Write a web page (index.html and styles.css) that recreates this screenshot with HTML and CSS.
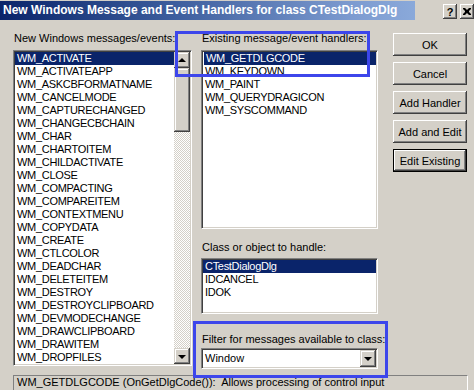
FILE: index.html
```html
<!DOCTYPE html>
<html>
<head>
<meta charset="utf-8">
<link rel="stylesheet" href="styles.css">
</head>
<body>
<div class="window">
  <div class="titlebar">
    <div class="caption">New Windows Message and Event Handlers for class CTestDialogDlg</div>
    <div class="tbtns">
      <span class="tbtn help">?</span>
      <span class="tbtn close"><svg width="8" height="7" viewBox="0 0 8 7"><path d="M0 0h2l2 2 2-2h2v1l-2 2v1l2 2v1h-2l-2-2-2 2h-2v-1l2-2v-1l-2-2z" fill="#000"/></svg></span>
    </div>
  </div>

  <div class="main">
    <div class="col col-left">
      <div class="label">New Windows messages/events:</div>
      <div class="listbox lb-messages">
        <div class="items">
          <div class="item sel">WM_ACTIVATE</div>
          <div class="item">WM_ACTIVATEAPP</div>
          <div class="item">WM_ASKCBFORMATNAME</div>
          <div class="item">WM_CANCELMODE</div>
          <div class="item">WM_CAPTURECHANGED</div>
          <div class="item">WM_CHANGECBCHAIN</div>
          <div class="item">WM_CHAR</div>
          <div class="item">WM_CHARTOITEM</div>
          <div class="item">WM_CHILDACTIVATE</div>
          <div class="item">WM_CLOSE</div>
          <div class="item">WM_COMPACTING</div>
          <div class="item">WM_COMPAREITEM</div>
          <div class="item">WM_CONTEXTMENU</div>
          <div class="item">WM_COPYDATA</div>
          <div class="item">WM_CREATE</div>
          <div class="item">WM_CTLCOLOR</div>
          <div class="item">WM_DEADCHAR</div>
          <div class="item">WM_DELETEITEM</div>
          <div class="item">WM_DESTROY</div>
          <div class="item">WM_DESTROYCLIPBOARD</div>
          <div class="item">WM_DEVMODECHANGE</div>
          <div class="item">WM_DRAWCLIPBOARD</div>
          <div class="item">WM_DRAWITEM</div>
          <div class="item">WM_DROPFILES</div>
        </div>
        <div class="vscroll">
          <div class="sbtn"><i class="arr-up"></i></div>
          <div class="thumb"></div>
          <div class="track"></div>
          <div class="sbtn"><i class="arr-down"></i></div>
        </div>
      </div>
    </div>

    <div class="col col-mid">
      <div class="label">Existing message/event handlers:</div>
      <div class="listbox lb-existing">
        <div class="items">
          <div class="item sel">WM_GETDLGCODE</div>
          <div class="item">WM_KEYDOWN</div>
          <div class="item">WM_PAINT</div>
          <div class="item">WM_QUERYDRAGICON</div>
          <div class="item">WM_SYSCOMMAND</div>
        </div>
      </div>
      <div class="label label-class">Class or object to handle:</div>
      <div class="listbox lb-class">
        <div class="items">
          <div class="item sel">CTestDialogDlg</div>
          <div class="item">IDCANCEL</div>
          <div class="item">IDOK</div>
        </div>
      </div>
      <div class="label label-filter">Filter for messages available to class:</div>
      <div class="combo">
        <div class="combo-text">Window</div>
        <div class="sbtn combo-btn"><i class="arr-down"></i></div>
      </div>
    </div>

    <div class="col col-right">
      <div class="btn">OK</div>
      <div class="btn">Cancel</div>
      <div class="btn">Add Handler</div>
      <div class="btn">Add and Edit</div>
      <div class="btn default"><span>Edit Existing</span></div>
    </div>
  </div>

  <div class="status">WM_GETDLGCODE (OnGetDlgCode()):&nbsp; Allows processing of control input</div>

  <div class="mark mark1"></div>
  <div class="mark mark2"></div>
</div>
</body>
</html>
```

FILE: styles.css
```css
* { box-sizing: border-box; }
html, body {
  margin: 0;
  padding: 0;
  background: #d4d0c8;
}
body {
  width: 474px;
  height: 390px;
  overflow: hidden;
  font-family: "Liberation Sans", Arial, sans-serif;
  font-size: 11px;
  color: #000;
}
.window {
  position: relative;
  width: 474px;
  height: 390px;
  background: #d4d0c8;
}

/* title bar */
.titlebar {
  display: flex;
  align-items: flex-start;
  padding-top: 1px;
  height: 20px;
}
.caption {
  width: 415px;
  height: 19px;
  background: linear-gradient(90deg, #0a246a 0%, #3a5b9b 40%, #7d9bd0 85%, #8aa9da 100%);
  color: #fff;
  font-weight: bold;
  font-size: 12px;
  line-height: 18px;
  padding-left: 3px;
  white-space: nowrap;
  overflow: hidden;
}
.tbtns {
  display: flex;
  gap: 3px;
  margin-left: 28px;
  margin-top: 3px;
}
.tbtn {
  width: 14px;
  height: 15px;
  background: #d4d0c8;
  box-shadow: inset -1px -1px #404040, inset 1px 1px #ffffff, inset -2px -2px #808080;
  display: flex;
  align-items: center;
  justify-content: center;
  font-weight: bold;
  font-size: 11px;
  line-height: 1;
}
.tbtn.help { padding-top: 1px; }

/* main layout */
.main {
  display: flex;
  padding: 12px 0 0 13px;
  height: 348px;
}
.col {
  display: flex;
  flex-direction: column;
}
.col-left { width: 179px; }
.col-mid { width: 177px; margin-left: 9px; }
.col-right { width: 74px; margin-left: 15px; padding-top: 1px; gap: 6px; }

.label {
  height: 13px;
  line-height: 13px;
  white-space: nowrap;
  padding-left: 1px;
}

/* sunken listbox */
.listbox {
  background: #fff;
  border: 1px solid;
  border-color: #808080 #ffffff #ffffff #808080;
  box-shadow: inset 1px 1px #404040, inset -1px -1px #d4d0c8;
  padding: 1px;
  display: flex;
  overflow: hidden;
  flex: none;
}
.items {
  flex: 1;
  min-width: 0;
}
.item {
  height: 13px;
  line-height: 13px;
  padding-left: 2px;
  white-space: nowrap;
  letter-spacing: -0.3px;
}
.item.sel {
  background: #0a246a;
  color: #fff;
}

.lb-messages { margin-top: 5px; height: 316px; }
.lb-existing { margin-top: 5px; height: 179px; }
.lb-existing .item.sel { margin-left: 1px; }
.label-class { margin-top: 12px; }
.lb-class { margin-top: 4px; height: 56px; }
.label-filter { margin-top: 19px; }

/* scrollbar */
.vscroll {
  width: 16px;
  display: flex;
  flex-direction: column;
}
.sbtn {
  width: 16px;
  height: 16px;
  background: #d4d0c8;
  box-shadow: inset -1px -1px #404040, inset 1px 1px #d4d0c8, inset -2px -2px #808080, inset 2px 2px #ffffff;
  display: flex;
  align-items: center;
  justify-content: center;
  flex: none;
}
.thumb {
  height: 64px;
  background: #d4d0c8;
  box-shadow: inset -1px -1px #404040, inset 1px 1px #d4d0c8, inset -2px -2px #808080, inset 2px 2px #ffffff;
  flex: none;
}
.track {
  flex: 1;
  background-color: #d4d0c8;
  background-image: repeating-conic-gradient(#ffffff 0 25%, #d4d0c8 0 50%);
  background-size: 2px 2px;
}
.arr-up, .arr-down {
  display: block;
  width: 0;
  height: 0;
  border-left: 4px solid transparent;
  border-right: 4px solid transparent;
}
.arr-up { border-bottom: 4px solid #000; }
.arr-down { border-top: 4px solid #000; margin-top: 1px; }

/* combo */
.combo {
  margin-top: 2px;
  height: 21px;
  background: #fff;
  border: 1px solid;
  border-color: #808080 #ffffff #ffffff #808080;
  box-shadow: inset 1px 1px #404040, inset -1px -1px #d4d0c8;
  padding: 1px;
  display: flex;
  flex: none;
}
.combo-text {
  flex: 1;
  line-height: 17px;
  padding-left: 2px;
}
.combo-btn {
  width: 16px;
  height: 17px;
}

/* buttons */
.btn {
  height: 23px;
  background: #d4d0c8;
  box-shadow: inset -1px -1px #404040, inset 1px 1px #ffffff, inset -2px -2px #808080, inset 2px 2px #d4d0c8;
  display: flex;
  align-items: center;
  justify-content: center;
  white-space: nowrap;
  flex: none;
}
.btn.default {
  border: 1px solid #000;
  box-shadow: inset -1px -1px #404040, inset 1px 1px #ffffff, inset -2px -2px #808080;
}

/* status line */
.status {
  margin: 7px 0 0 13px;
  width: 455px;
  height: 20px;
  border-top: 1px solid #808080;
  border-left: 1px solid #808080;
  border-right: 1px solid #ffffff;
  padding-left: 3px;
  line-height: 13px;
  white-space: nowrap;
  overflow: hidden;
}

/* annotation rectangles */
.mark {
  position: absolute;
  border: 3px solid #3d46eb;
}
.mark1 { left: 175px; top: 31px; width: 195px; height: 46px; }
.mark2 { left: 193px; top: 321px; width: 195px; height: 57px; }
```
